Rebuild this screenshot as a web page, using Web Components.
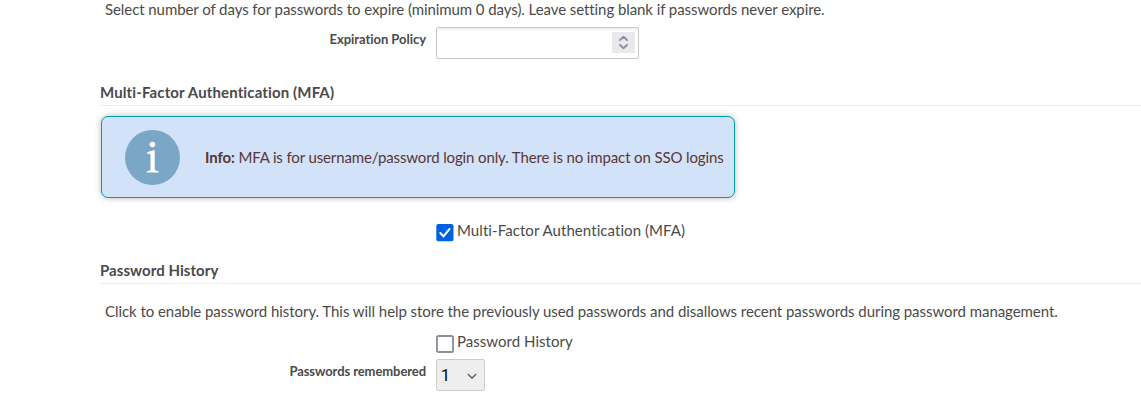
<!DOCTYPE html>
<html lang="en">
<head>
<meta charset="utf-8">
<title>Password settings</title>
<style>
body{margin:0;background:#fff;overflow:hidden;font-family:Lato,"Liberation Sans",sans-serif;font-variant-ligatures:none;color:#4a4a4a}
</style>
</head>
<body>
<settings-page></settings-page>
<script>
function define(name, html){
  const t=document.createElement('template');
  t.innerHTML=html;
  customElements.define(name, class extends HTMLElement{
    connectedCallback(){
      if(this.shadowRoot) return;
      this.attachShadow({mode:'open'}).append(t.content.cloneNode(true));
    }
  });
}
define('setting-text',`<style>
:host{display:block;font-size:15px;line-height:20px;padding-left:5px;white-space:nowrap;letter-spacing:-.075px}
</style><slot></slot>`);
define('section-title',`<style>
:host{display:block;box-sizing:border-box;height:24px;font-size:15px;line-height:20px;font-weight:700;border-bottom:1px solid #ececec;white-space:nowrap;letter-spacing:.06px}
</style><slot></slot>`);
define('field-row',`<style>
:host{display:grid;grid-template-columns:326px auto;column-gap:10px;align-items:start;justify-content:start;letter-spacing:-.08px}
.label{text-align:right;font-size:13px;line-height:18px;font-weight:700;padding-top:3px;white-space:nowrap}
</style><div class="label"><slot name="label"></slot></div><slot></slot>`);
define('number-field',`<style>
:host{display:flex;box-sizing:border-box;width:203px;height:32px;border:1px solid #c8c8c8;border-radius:2px;background:#fff;box-shadow:inset 0 2px 2px #f1f1f1;align-items:center;justify-content:flex-end;padding:0 3px 2px 0}
span{display:block;width:23px;height:21px;background:#e9e9ed}
svg{display:block}
</style><span><svg width="23" height="21" viewBox="0 0 23 21" fill="none" stroke="#8f8f9d" stroke-width="1.9" stroke-linecap="round" stroke-linejoin="round"><path d="M8 8l3.5-3.3L15 8M8 13l3.5 3.3L15 13"/></svg></span>`);
define('info-box',`<style>
:host{display:flex;box-sizing:border-box;width:634px;height:82px;border:1px solid #009fa8;border-radius:7px;background:#d2e2f8;box-shadow:0 0 6px rgba(0,0,0,.28);align-items:center;padding-left:23px;gap:25px;color:#5a3636;font-size:15px;line-height:20px;white-space:nowrap;letter-spacing:-.13px}
svg{flex:none}
</style><svg width="55" height="55" viewBox="0 0 55 55"><circle cx="27.5" cy="27.5" r="27.5" fill="#7ba7c7"/><circle cx="27.4" cy="14.4" r="2.75" fill="#fff"/><path d="M22 22.3l6.5-2h1.2v18.9q0 1.7 3.9 2v1.2H21.8v-1.2q3.7-.3 3.7-2V25.3q0-2-3.5-1.8z" fill="#fff"/></svg><div><slot></slot></div>`);
define('check-option',`<style>
:host{display:flex;gap:3px;font-size:15px;line-height:20px;white-space:nowrap;height:24px;letter-spacing:.03px}
svg{display:block;margin-top:4px}
.on{display:none}
:host([checked]) .on{display:block}
:host([checked]) .off{display:none}
</style><svg width="18" height="18" viewBox="0 0 18 18"><rect class="off" x="1" y="1" width="16" height="16" rx="1.6" fill="#fff" stroke="#8f8f9d" stroke-width="1.9"/><g class="on"><rect x=".3" y="0" width="17.2" height="17.2" rx="2" fill="#0060df"/><path d="M4.3 9l3.2 3.4 6-7.4" fill="none" stroke="#fff" stroke-width="2" stroke-linecap="round" stroke-linejoin="round"/></g></svg><slot></slot>`);
define('select-field',`<style>
:host{display:flex;box-sizing:border-box;width:49px;height:32px;border:1px solid #ccc;border-radius:2px;background:#eee;color:#000;font-family:Roboto,"Liberation Sans",sans-serif;font-size:16px;line-height:20px;align-items:center;justify-content:space-between;padding:2px 7px 0 4px}
svg{display:block}
</style><span><slot></slot></span><svg width="10" height="7" viewBox="0 0 10 7" fill="none" stroke="#666" stroke-width="1.5" stroke-linecap="round" stroke-linejoin="round"><path d="M1.3 1.5L5 5.1l3.7-3.6"/></svg>`);
define('settings-page',`<style>
:host{display:flex;flex-direction:column;box-sizing:border-box;height:410px;padding-left:100px}
.intro{height:20px;line-height:18px}
.policy{margin-top:7px;letter-spacing:-.04px}
.mfa{margin-top:23px;letter-spacing:.13px}
info-box{margin:10px 0 0 1px}
.mfacheck{margin-top:22px;letter-spacing:.07px}
.history{margin-top:16px}
.desc{margin-top:17px;letter-spacing:-.056px}
.histcheck{margin-top:10px}
.remember{margin-top:4px}
check-option.indent{margin-left:336px}
</style>
<setting-text class="intro">Select number of days for passwords to expire (minimum 0 days). Leave setting blank if passwords never expire.</setting-text>
<field-row class="policy"><span slot="label">Expiration Policy</span><number-field></number-field></field-row>
<section-title class="mfa">Multi-Factor Authentication (MFA)</section-title>
<info-box><b>Info:</b> MFA is for username/password login only. There is no impact on SSO logins</info-box>
<check-option class="indent mfacheck" checked>Multi-Factor Authentication (MFA)</check-option>
<section-title class="history">Password History</section-title>
<setting-text class="desc">Click to enable password history. This will help store the previously used passwords and disallows recent passwords during password management.</setting-text>
<check-option class="indent histcheck">Password History</check-option>
<field-row class="remember"><span slot="label">Passwords remembered</span><select-field>1</select-field></field-row>`);
</script>
</body>
</html>
